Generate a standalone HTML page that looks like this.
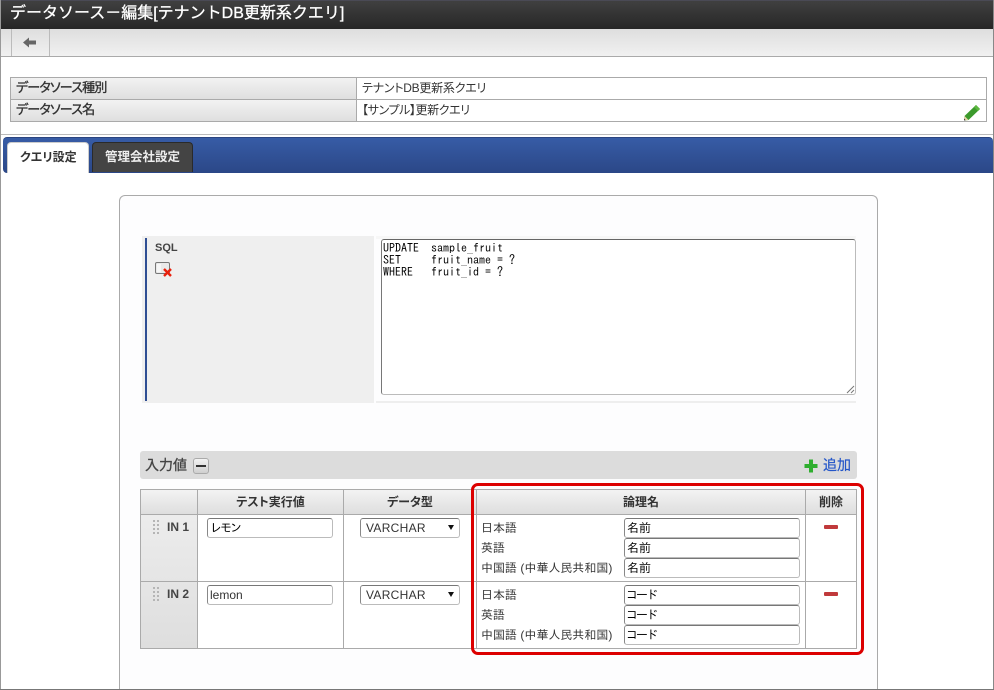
<!DOCTYPE html>
<html lang="ja"><head><meta charset="utf-8"><title>データソース</title>
<style>
html,body{margin:0;padding:0;background:#fff}
body{width:994px;height:690px;overflow:hidden;position:relative;font-family:"Liberation Sans","IPAGothic","Noto Sans CJK JP",sans-serif;font-size:12px;color:#333}
div,span,svg{position:absolute;box-sizing:border-box}
.t{white-space:nowrap;line-height:16px}
.b{font-family:"Liberation Sans","Noto Sans CJK JP",sans-serif;font-weight:bold;font-feature-settings:"palt"}
.inp{background:#fff;border:1px solid #bbb;border-top-color:#777;border-left-color:#888;border-radius:3px;height:20px;font-family:"IPAGothic","Liberation Mono",monospace;font-size:12px;color:#000;line-height:18px;padding-left:2px;white-space:nowrap}
.k{letter-spacing:-2px;padding-left:1px}
.hd{background:linear-gradient(#f3f3f3,#dedede);top:490px;height:24px;text-align:center;line-height:24px;font-family:"Liberation Sans","Noto Sans CJK JP",sans-serif;font-weight:bold;color:#333;font-feature-settings:"palt"}
.ln{background:#aaa}
.lb{font-family:"Liberation Sans","IPAGothic",sans-serif;color:#333;white-space:nowrap;line-height:16px;font-size:12px}
.v{font-family:"Liberation Sans","Noto Sans CJK JP",sans-serif;font-feature-settings:"palt";color:#333;white-space:nowrap;line-height:16px;font-size:12px}
.s{font-family:"Liberation Sans","Noto Sans CJK JP",sans-serif;font-feature-settings:"palt";-webkit-text-stroke:.35px #333;color:#333;font-size:13px;letter-spacing:-.8px}
</style></head><body>
<div style="left:0;top:0;width:994px;height:29px;background:linear-gradient(#404040,#262626);border-top:1px solid #4a4a55"></div>
<div class="t" style="left:10px;top:4px;font-size:16px;line-height:20px;color:#fff;-webkit-text-stroke:.3px #fff;font-family:'Liberation Sans','Noto Sans CJK JP',sans-serif">データソース－編集[テナントDB更新系クエリ]</div>
<div style="left:0;top:29px;width:994px;height:28px;background:linear-gradient(#dedede,#f1f1f1);border-bottom:1px solid #aaa"></div>
<div class="ln" style="left:11px;top:29px;width:1px;height:27px;background:#bbb"></div>
<div class="ln" style="left:49px;top:29px;width:1px;height:27px;background:#bbb"></div>
<svg style="left:22px;top:36px" width="15" height="13" viewBox="0 0 15 13"><path d="M1 6.500L7 1.500V4.500H14V8.500H7V11.500Z" fill="#666"/></svg>

<div style="left:10px;top:77px;width:977px;height:45px;border:1px solid #aaa;background:#fff"></div>
<div style="left:11px;top:78px;width:345px;height:21px;background:linear-gradient(#f2f2f2,#dfdfdf)"></div>
<div style="left:11px;top:100px;width:345px;height:21px;background:linear-gradient(#f2f2f2,#dfdfdf)"></div>
<div class="ln" style="left:10px;top:99px;width:977px;height:1px"></div>
<div class="ln" style="left:356px;top:77px;width:1px;height:45px"></div>
<div class="t s" style="left:16px;top:80px">データソース種別</div>
<div class="t s" style="left:16px;top:102px">データソース名</div>
<div class="v" style="left:362px;top:80px;letter-spacing:-.25px">テナントDB更新系クエリ</div>
<div class="v" style="left:362px;top:102px;letter-spacing:-.4px">【サンプル】更新クエリ</div>
<svg style="left:963px;top:103px" width="18" height="18" viewBox="0 0 18 18"><path d="M1.500 13L13 2L17 6L5.500 17L1 17.500Z" fill="#3c9a2c"/><path d="M13 2L17 6L15 8L11 4Z" fill="#5cb83f"/><path d="M1.500 13L5.500 17L1 17.500Z" fill="#e8d5a8"/><path d="M1 15.500L2.800 17.300L1 17.500Z" fill="#333"/></svg>

<div style="left:0;top:134px;width:994px;height:1px;background:#bbb"></div>
<div style="left:3px;top:137px;width:990px;height:36px;background:linear-gradient(#375ca6,#2b4787);border-top:1px solid #2a4480;border-radius:4px 4px 0 4px"></div>
<div style="left:7px;top:142px;width:82px;height:31px;background:#fff;border:1px solid #ccc;border-bottom:0;border-radius:4px 4px 0 0"></div>
<div class="t b" style="left:20px;top:149px;color:#333;font-size:12px">クエリ設定</div>
<div style="left:92px;top:142px;width:101px;height:30px;background:#444;border:1px solid #2a2a2a;border-bottom:0;border-radius:4px 4px 0 0"></div>
<div class="t b" style="left:105px;top:149px;color:#eee;font-size:12.500px">管理会社設定</div>

<div style="left:0;top:0;width:1px;height:690px;background:#999"></div>
<div style="left:993px;top:0;width:1px;height:690px;background:#888"></div>
<div style="left:0;top:689px;width:994px;height:1px;background:#777"></div>

<div style="left:119px;top:195px;width:759px;height:494px;background:#fdfdfe;border:1px solid #aaa;border-bottom:0;border-radius:6px 6px 0 0"></div>
<div style="left:142px;top:236px;width:232px;height:167px;background:#efefef"></div>
<div style="left:145px;top:238px;width:2px;height:163px;background:#2f4e93"></div>
<div style="left:376px;top:236px;width:480px;height:3px;background:#f7f7f7"></div>
<div style="left:376px;top:401px;width:480px;height:2px;background:#eee"></div>
<div class="t b" style="left:155px;top:240px;font-size:11px;color:#444">SQL</div>
<svg style="left:155px;top:262px" width="18" height="15" viewBox="0 0 18 15"><rect x="0.500" y="0.500" width="14" height="11" rx="1.500" fill="#e9e9e9" stroke="#777"/><rect x="2" y="2" width="4" height="8" fill="#f6f6f6"/><path d="M9 7L16 14M16 7L9 14" stroke="#e8200c" stroke-width="2.400"/></svg>
<div style="left:381px;top:239px;width:475px;height:156px;background:#fff;border:1px solid #bbb;border-top-color:#666;border-left-color:#777;border-radius:3px"></div>
<div style="left:383px;top:242px;font:12px/12px 'IPAGothic','Liberation Mono',monospace;color:#000;white-space:pre">UPDATE  sample_fruit
SET     fruit_name = ?
WHERE   fruit_id = ?</div>
<svg style="left:846px;top:385px" width="9" height="9" viewBox="0 0 9 9"><path d="M1 8L8 1M5 8L8 5" stroke="#777" stroke-width="1" fill="none"/></svg>

<div style="left:140px;top:451px;width:717px;height:28px;background:#dcdcdc;border-radius:3px"></div>
<div class="t" style="left:145px;top:457px;font-size:14px;color:#444;-webkit-text-stroke:.3px #444;font-family:'Liberation Sans','Noto Sans CJK JP',sans-serif">入力値</div>
<div style="left:193px;top:458px;width:16px;height:16px;background:linear-gradient(#f3f3f3,#cfcfcf);border:1px solid #aaa;border-radius:3px"></div>
<div style="left:196px;top:465px;width:10px;height:2px;background:#333"></div>
<svg style="left:804px;top:459px" width="14" height="14" viewBox="0 0 14 14"><path d="M5 0.500H9V5H13.500V9H9V13.500H5V9H0.500V5H5Z" fill="#2fae2f"/></svg>
<div class="t" style="left:823px;top:457px;font-size:14px;color:#2456c8;-webkit-text-stroke:.2px #2456c8;font-family:'Liberation Sans','Noto Sans CJK JP',sans-serif">追加</div>

<div style="left:140px;top:489px;width:717px;height:160px;background:#fff;border:1px solid #aaa"></div>
<div style="left:141px;top:515px;width:56px;height:133px;background:linear-gradient(#ececec,#dedede)"></div>
<div class="hd" style="left:141px;width:56px"></div>
<div class="hd" style="left:198px;width:145px">テスト実行値</div>
<div class="hd" style="left:344px;width:132px">データ型</div>
<div class="hd" style="left:477px;width:328px">論理名</div>
<div class="hd" style="left:806px;width:50px">削除</div>
<div class="ln" style="left:197px;top:489px;width:1px;height:160px"></div>
<div class="ln" style="left:343px;top:489px;width:1px;height:160px"></div>
<div class="ln" style="left:476px;top:489px;width:1px;height:160px"></div>
<div class="ln" style="left:805px;top:489px;width:1px;height:160px"></div>
<div class="ln" style="left:140px;top:514px;width:717px;height:1px"></div>
<div class="ln" style="left:140px;top:581px;width:717px;height:1px"></div>

<svg style="left:153px;top:520px" width="7" height="15" viewBox="0 0 7 15" fill="#b5b5b5"><path d="M0 0h2v2H0zM4 0h2v2H4zM0 4h2v2H0zM4 4h2v2H4zM0 8h2v2H0zM4 8h2v2H4zM0 12h2v2H0zM4 12h2v2H4z"/></svg>
<svg style="left:153px;top:587px" width="7" height="15" viewBox="0 0 7 15" fill="#b5b5b5"><path d="M0 0h2v2H0zM4 0h2v2H4zM0 4h2v2H0zM4 4h2v2H4zM0 8h2v2H0zM4 8h2v2H4zM0 12h2v2H0zM4 12h2v2H4z"/></svg>
<div class="t b" style="left:167px;top:519px;color:#444">IN 1</div>
<div class="t b" style="left:167px;top:586px;color:#444">IN 2</div>

<div class="inp k" style="left:207px;top:518px;width:126px;padding-left:2px">レモン</div>
<div class="inp" style="left:207px;top:585px;width:126px;font-family:'Liberation Sans',sans-serif;color:#333">lemon</div>
<div class="inp" style="left:360px;top:518px;width:100px;font-family:'Liberation Sans',sans-serif;color:#333;padding-left:5px;letter-spacing:.3px">VARCHAR</div>
<div class="inp" style="left:360px;top:585px;width:100px;font-family:'Liberation Sans',sans-serif;color:#333;padding-left:5px;letter-spacing:.3px">VARCHAR</div>
<svg style="left:447px;top:524px" width="8" height="7" viewBox="0 0 8 7"><path d="M1 1H7L4 6Z" fill="#111"/></svg>
<svg style="left:447px;top:591px" width="8" height="7" viewBox="0 0 8 7"><path d="M1 1H7L4 6Z" fill="#111"/></svg>

<div class="lb" style="left:481px;top:520px">日本語</div>
<div class="lb" style="left:481px;top:540px">英語</div>
<div class="lb" style="left:481px;top:560px">中国語 (中華人民共和国)</div>
<div class="lb" style="left:481px;top:587px">日本語</div>
<div class="lb" style="left:481px;top:607px">英語</div>
<div class="lb" style="left:481px;top:627px">中国語 (中華人民共和国)</div>
<div class="inp" style="left:624px;top:518px;width:176px">名前</div>
<div class="inp" style="left:624px;top:538px;width:176px">名前</div>
<div class="inp" style="left:624px;top:558px;width:176px">名前</div>
<div class="inp k" style="left:624px;top:585px;width:176px">コード</div>
<div class="inp k" style="left:624px;top:605px;width:176px">コード</div>
<div class="inp k" style="left:624px;top:625px;width:176px">コード</div>
<div style="left:824px;top:525px;width:14px;height:4px;background:#c0393b;border-radius:1px"></div>
<div style="left:824px;top:592px;width:14px;height:4px;background:#c0393b;border-radius:1px"></div>

<div style="left:471px;top:483px;width:393px;height:172px;border:3px solid #dc0000;border-radius:7px"></div>
</body></html>
